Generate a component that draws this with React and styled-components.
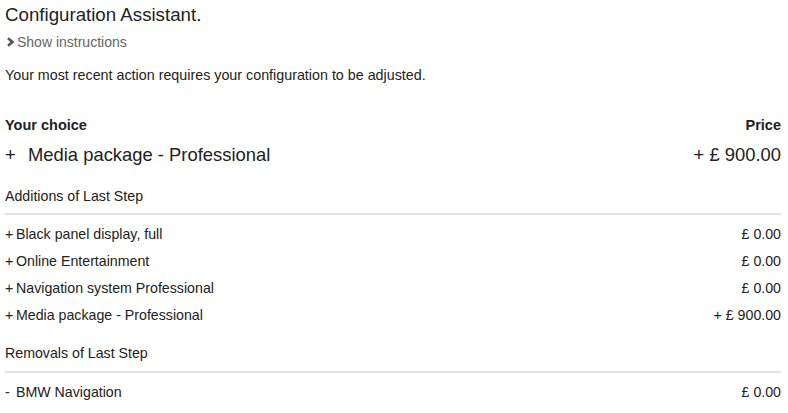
import styled, { createGlobalStyle } from 'styled-components';

const GlobalStyle = createGlobalStyle`
  body {
    margin: 0;
    background: #fff;
    font-family: "Liberation Sans", Arial, sans-serif;
    color: #222;
  }
`;

const Page = styled.div`
  padding: 3px 7px 0 5px;
`;

const Title = styled.h1`
  margin: 0;
  font-size: 18.7px;
  font-weight: normal;
  line-height: 24px;
  color: #222;
`;

const Toggle = styled.button`
  display: flex;
  align-items: center;
  gap: 1px;
  margin-top: 5px;
  padding: 0;
  height: 20px;
  border: none;
  background: none;
  font-family: inherit;
  font-size: 14px;
  color: #666;
  cursor: pointer;
`;

const Message = styled.p`
  margin: 14px 0 0;
  font-size: 14.3px;
  line-height: 18px;
`;

const Row = styled.div`
  display: flex;
  justify-content: space-between;
  align-items: center;
  height: ${({ h }) => h || 27}px;
  margin-top: ${({ mt }) => mt || 0}px;
  font-size: ${({ size }) => size || 14.2}px;
  font-weight: ${({ bold }) => (bold ? 'bold' : 'normal')};
`;

const Sign = styled.span`
  display: inline-block;
  width: ${({ w }) => w}px;
`;

const Divider = styled.hr`
  margin: ${({ mt }) => mt}px 0 5px;
  border: none;
  height: 2px;
  background: #e2e2e2;
`;

const Chevron = () => (
  <svg width="11" height="10" viewBox="0 0 11 10">
    <path d="M3 1.3 L7.5 5 L3 8.7" fill="none" stroke="#555" strokeWidth="2.6" />
  </svg>
);

const additions = [
  { name: 'Black panel display, full', price: '£ 0.00' },
  { name: 'Online Entertainment', price: '£ 0.00' },
  { name: 'Navigation system Professional', price: '£ 0.00' },
  { name: 'Media package - Professional', price: '+ £ 900.00' },
];

const removals = [{ name: 'BMW Navigation', price: '£ 0.00' }];

export default function App() {
  return (
    <Page>
      <GlobalStyle />
      <Title>Configuration Assistant.</Title>
      <Toggle type="button">
        <Chevron />
        Show instructions
      </Toggle>
      <Message>Your most recent action requires your configuration to be adjusted.</Message>

      <Row bold size={14.5} h={18} mt={32}>
        <span>Your choice</span>
        <span>Price</span>
      </Row>
      <Row size={18.4} h={26} mt={8}>
        <span>
          <Sign w={23}>+</Sign>Media package - Professional
        </span>
        <span>+ £ 900.00</span>
      </Row>

      <Row h={18} mt={19}>
        <span>Additions of Last Step</span>
      </Row>
      <Divider mt={8} />
      {additions.map((item) => (
        <Row key={item.name}>
          <span>
            <Sign w={11}>+</Sign>
            {item.name}
          </span>
          <span>{item.price}</span>
        </Row>
      ))}

      <Row h={18} mt={16}>
        <span>Removals of Last Step</span>
      </Row>
      <Divider mt={9} />
      {removals.map((item) => (
        <Row key={item.name}>
          <span>
            <Sign w={11}>-</Sign>
            {item.name}
          </span>
          <span>{item.price}</span>
        </Row>
      ))}
    </Page>
  );
}
